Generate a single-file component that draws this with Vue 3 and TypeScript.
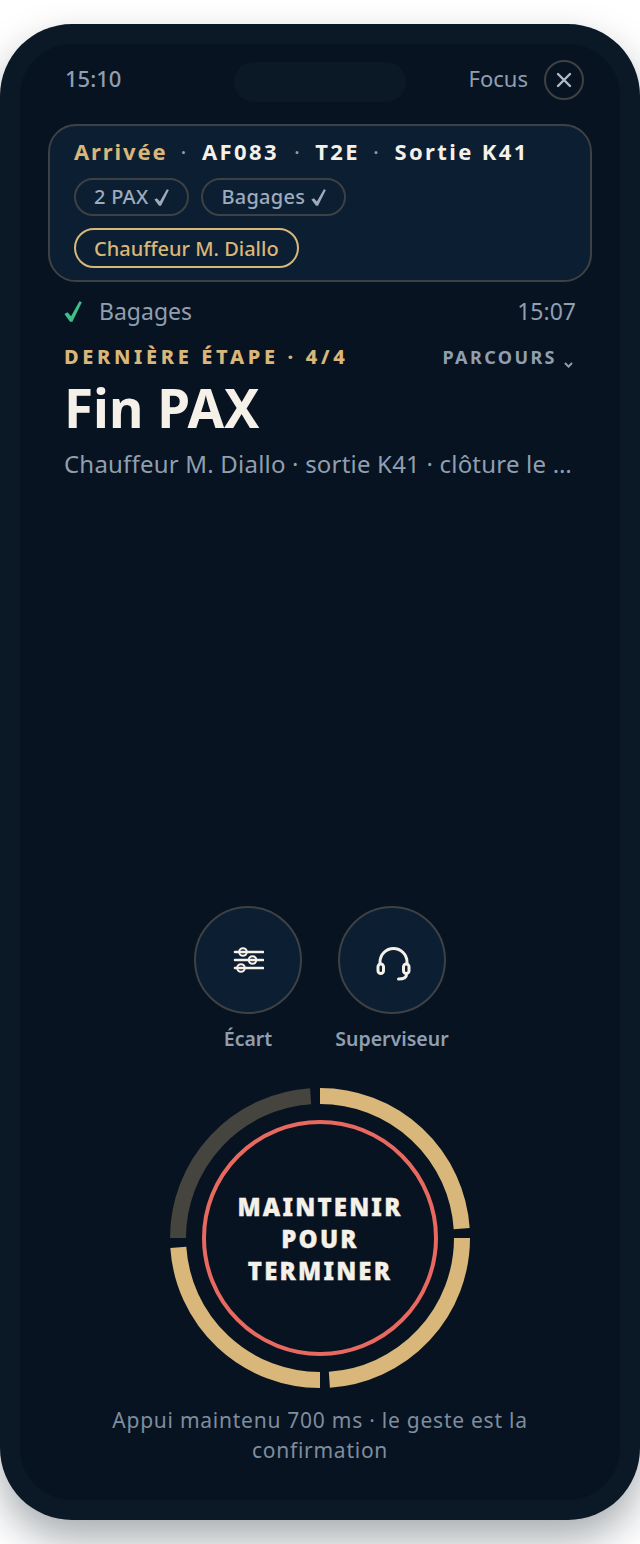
<template>
  <div class="page">
    <div class="phone">
      <div class="screen">
        <header class="status">
          <span class="status-text clock">15:10</span>
          <span class="notch"></span>
          <div class="focus">
            <span class="status-text">Focus</span>
            <button class="close-btn" aria-label="Fermer">
              <svg width="18" height="18" viewBox="0 0 18 18" fill="none" stroke="currentColor" stroke-width="2.4" stroke-linecap="round">
                <path d="M3 3l12 12M15 3L3 15" />
              </svg>
            </button>
          </div>
        </header>

        <section class="mission">
          <div class="mission-line">
            <span class="gold">Arrivée</span>
            <span class="dot">·</span>
            <span class="flight">AF083</span>
            <span class="dot">·</span>
            <span>T2E</span>
            <span class="dot">·</span>
            <span>Sortie K41</span>
          </div>
          <div class="chips">
            <span v-for="chip in chips" :key="chip" class="chip">
              {{ chip }}
              <svg class="tick" width="15" height="17" viewBox="0 0 12 17" preserveAspectRatio="none" fill="currentColor">
                <path :d="tickPath" />
              </svg>
            </span>
            <span class="chip chip-active">Chauffeur M. Diallo</span>
          </div>
        </section>

        <div class="done-row">
          <svg class="done-check" width="18" height="21" viewBox="0 0 12 17" preserveAspectRatio="none" fill="currentColor">
            <path :d="tickPath" />
          </svg>
          <span>Bagages</span>
          <span class="done-time">15:07</span>
        </div>

        <div class="step-row">
          <span class="step-label">DERNIÈRE ÉTAPE · 4/4</span>
          <span class="route">
            PARCOURS
            <svg class="route-caret" width="9" height="6" viewBox="0 0 9 6" fill="none" stroke="currentColor" stroke-width="2">
              <path d="M1 1l3.5 3.6L8 1" />
            </svg>
          </span>
        </div>
        <h1 class="title">Fin PAX</h1>
        <p class="sub">Chauffeur M. Diallo · sortie K41 · clôture le …</p>

        <div class="spacer"></div>

        <div class="actions">
          <div class="action">
            <button class="action-btn" aria-label="Écart">
              <svg width="32" height="32" viewBox="0 0 32 32" fill="none" stroke="currentColor" stroke-linecap="round">
                <path d="M3 8h28M3 16h28M3 24h28" stroke-width="2.6" />
                <circle cx="11" cy="8" r="3.8" stroke-width="2" />
                <circle cx="20.5" cy="16" r="3.8" stroke-width="2" />
                <circle cx="9" cy="24" r="3.8" stroke-width="2" />
              </svg>
            </button>
            <span class="action-label">Écart</span>
          </div>
          <div class="action">
            <button class="action-btn" aria-label="Superviseur">
              <svg width="42" height="42" viewBox="0 0 42 42" fill="none" stroke="currentColor" stroke-width="3" stroke-linecap="round">
                <path d="M9 24v-1a13.5 13.5 0 0 1 27 0v1" />
                <rect x="7" y="25" width="5.5" height="9.5" rx="2.75" />
                <rect x="32.5" y="25" width="5.5" height="9.5" rx="2.75" />
                <path d="M35.5 35.5c0 3-2 4.5-8 4.5" />
              </svg>
            </button>
            <span class="action-label">Superviseur</span>
          </div>
        </div>

        <button class="hold">
          <svg class="hold-ring" width="300" height="300" viewBox="0 0 300 300" fill="none">
            <circle
              v-for="seg in segments"
              :key="seg.angle"
              cx="150"
              cy="150"
              r="142"
              pathLength="360"
              stroke-width="16"
              stroke-dasharray="86.2 273.8"
              :stroke="seg.color"
              :transform="`rotate(${seg.angle} 150 150)`"
            />
            <circle cx="150" cy="150" r="116" stroke="#e8695f" stroke-width="4" />
          </svg>
          <span class="hold-text">MAINTENIR<br />POUR<br />TERMINER</span>
        </button>

        <p class="hint">Appui maintenu 700 ms · le geste est la confirmation</p>
      </div>
    </div>
  </div>
</template>

<script setup lang="ts">
const chips = ["2 PAX", "Bagages"];

// same slanted tick everywhere, filled so the long stroke can taper
const tickPath = "M0.3 10.6L2.3 9.2L4.7 12.4L10.3 0.3L11.9 1L5.6 16.8L4 16.8Z";

const segments = [
  { angle: -90, color: "#d9b679" },
  { angle: 0, color: "#d9b679" },
  { angle: 90, color: "#d9b679" },
  { angle: 180, color: "#45443f" },
];
</script>

<style>
html,
body {
  margin: 0;
  background: #fff;
}
</style>

<style scoped>
.page {
  width: 640px;
  height: 1544px;
  padding-top: 24px;
  box-sizing: border-box;
  overflow: hidden;
  font-family: "Noto Sans", "Open Sans", sans-serif;
}

.phone {
  height: 1496px;
  padding: 20px;
  box-sizing: border-box;
  background: #0b1826;
  border-radius: 72px;
  box-shadow: 0 20px 40px rgba(7, 19, 31, 0.35);
}

.screen {
  height: 100%;
  box-sizing: border-box;
  padding: 18px 28px 35px;
  background: #071321;
  border-radius: 52px;
  display: flex;
  flex-direction: column;
}

.status {
  height: 40px;
  display: flex;
  align-items: center;
  justify-content: space-between;
  padding: 0 8px 4px 17px;
  box-sizing: border-box;
  color: #909fb0;
  font-size: 22px;
  position: relative;
}

.status-text {
  margin-bottom: 4px;
}

.clock {
  font-weight: 500;
}

.notch {
  position: absolute;
  left: 186px;
  top: 0;
  width: 172px;
  height: 40px;
  border-radius: 20px;
  background: #0b1826;
}

.focus {
  display: flex;
  align-items: center;
  gap: 16px;
}

.close-btn {
  width: 40px;
  height: 40px;
  padding: 0;
  border-radius: 50%;
  border: 2px solid #3e4143;
  background: none;
  color: #b0bcc8;
  display: flex;
  align-items: center;
  justify-content: center;
}

.mission {
  margin-top: 22px;
  height: 158px;
  box-sizing: border-box;
  padding: 10px 24px;
  background: #0c1e32;
  border: 2px solid #3e4143;
  border-radius: 28px;
}

.mission-line {
  display: flex;
  align-items: center;
  gap: 13px;
  font-size: 22px;
  font-weight: 700;
  letter-spacing: 2.4px;
  color: #f5f0e8;
  line-height: 30px;
}

.gold {
  color: #d9b679;
  letter-spacing: 1.9px;
}

.dot {
  color: #909fb0;
  font-weight: 400;
}

.flight {
  margin-right: 2px;
}

.chips {
  margin-top: 12px;
  display: flex;
  flex-wrap: wrap;
  gap: 12px;
}

.chip {
  height: 38px;
  box-sizing: border-box;
  padding: 0 18px 2px;
  border: 2px solid #3e4143;
  border-radius: 19px;
  display: flex;
  align-items: center;
  gap: 6px;
  color: #9dabbb;
  font-size: 20px;
  font-weight: 500;
  letter-spacing: 0.25px;
}

.tick {
  margin-top: 2px;
}

.chip-active {
  height: 40px;
  border-radius: 20px;
  border-color: #d9b679;
  color: #d9b679;
  padding-bottom: 0;
  letter-spacing: 0;
}

.done-row {
  margin-top: 11px;
  padding: 0 16px;
  display: flex;
  align-items: center;
  color: #909fb0;
  font-size: 23px;
  line-height: 36px;
}

.done-check {
  margin-right: 17px;
  color: #3fbf8a;
}

.done-time {
  margin-left: auto;
}

.step-row {
  padding: 0 16px;
  margin-top: 14px;
  display: flex;
  align-items: center;
  justify-content: space-between;
}

.step-label {
  color: #d9b679;
  font-size: 20px;
  font-weight: 800;
  letter-spacing: 3.65px;
}

.route {
  padding-right: 3px;
  color: #909fb0;
  font-size: 18px;
  font-weight: 700;
  letter-spacing: 2.4px;
}

.route-caret {
  margin-bottom: -4px;
}

.title {
  margin: 4px 0 0;
  padding: 0 16px;
  color: #f5f0e8;
  font-size: 53px;
  font-weight: 700;
  line-height: 68px;
}

.sub {
  margin: 4px 0 0;
  padding: 0 16px;
  color: #909fb0;
  font-size: 24px;
  letter-spacing: 0.2px;
  line-height: 36px;
  white-space: nowrap;
}

.spacer {
  flex: 1;
}

.actions {
  display: flex;
  justify-content: center;
  gap: 36px;
}

.action {
  width: 108px;
  display: flex;
  flex-direction: column;
  align-items: center;
  gap: 11px;
}

.action-btn {
  width: 108px;
  height: 108px;
  padding: 0;
  border-radius: 50%;
  border: 2px solid #3e4143;
  background: #0c1e32;
  color: #f5f0e8;
  display: flex;
  align-items: center;
  justify-content: center;
}

.action-label {
  color: #909fb0;
  font-size: 19.5px;
  font-weight: 600;
  white-space: nowrap;
}

.hold {
  position: relative;
  align-self: center;
  margin-top: 36px;
  width: 300px;
  height: 300px;
  padding: 0;
  border: none;
  background: none;
  display: flex;
  align-items: center;
  justify-content: center;
}

.hold-ring {
  position: absolute;
  left: 0;
  top: 0;
}

.hold-text {
  position: relative;
  top: 1px;
  color: #f5f0e8;
  font-family: "Noto Sans", sans-serif;
  font-size: 24px;
  font-weight: 900;
  -webkit-text-stroke: 0.3px #f5f0e8;
  letter-spacing: 2.2px;
  line-height: 32px;
  text-align: center;
}

.hint {
  margin: 17px 0 0;
  color: #7f8d9d;
  font-size: 21px;
  letter-spacing: 0.75px;
  line-height: 30px;
  text-align: center;
  padding: 0 30px;
}
</style>
